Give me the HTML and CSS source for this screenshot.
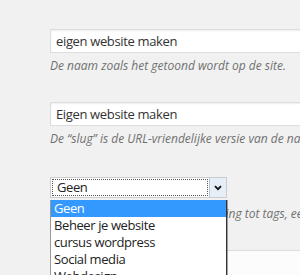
FILE: index.html
```html
<!DOCTYPE html>
<html lang="nl">
<head>
  <meta charset="UTF-8" />
  <meta name="viewport" content="width=device-width, initial-scale=1" />
  <title>Categorie bewerken</title>
  <link rel="stylesheet" href="styles.css">
</head>
<body>
  <div class="form-wrap">
    <div class="form-field field-name">
      <input class="text-input" type="text" value="eigen website maken" />
      <p class="description">De naam zoals het getoond wordt op de site.</p>
    </div>

    <div class="form-field field-slug">
      <input class="text-input" type="text" value="Eigen website maken" />
      <p class="description">De &ldquo;slug&rdquo; is de URL-vriendelijke versie van de naam.</p>
    </div>

    <div class="form-field field-parent">
      <div class="select-wrap">
        <div class="select-box">
          <span class="select-value">Geen</span>
          <span class="select-btn">
            <svg width="8" height="6" viewBox="0 0 8 6"><path d="M1 1.2 L4 4.2 L7 1.2" fill="none" stroke="#111" stroke-width="1.8"/></svg>
          </span>
        </div>
        <ul class="select-list">
          <li class="selected">Geen</li>
          <li>Beheer je website</li>
          <li>cursus wordpress</li>
          <li>Social media</li>
          <li>Webdesign</li>
        </ul>
      </div>
      <p class="description">Categorieën hebben, in tegenstelling tot tags, een hiërarchie.</p>
    </div>

    <div class="form-field field-desc">
      <textarea class="text-area" rows="5"></textarea>
    </div>
  </div>
</body>
</html>
```

FILE: styles.css
```css
* {
  box-sizing: border-box;
  margin: 0; padding: 0;
}
html, body {
  height: 100%;
  background-color: #f1f1f1;
  color: #333;
  font-family: "Open Sans", "Liberation Sans", sans-serif;
  overflow: hidden;
}
.form-wrap {
  padding: 29px 0 0 50px;
}
.form-field {
  width: 420px;
}
.field-slug {
  margin-top: 27px;
}
.field-parent {
  margin-top: 29px;
}
.field-desc {
  margin-top: 27px;
}
.text-input {
  display: block;
  width: 100%;
  height: 24px;
  padding: 0 5px;
  border: 1px solid #ddd;
  box-shadow: inset 0 1px 2px rgba(0,0,0,0.07);
  background: #fff;
  color: #333;
  font-family: "Open Sans", "Liberation Sans", sans-serif;
  font-size: 13px;
  letter-spacing: -0.35px;
  outline: none;
}
.description {
  margin-top: 4px;
  line-height: 18px;
  font-size: 12px;
  font-style: italic;
  color: #707070;
  white-space: nowrap;
}
.field-parent .description {
  margin-top: 7px;
}

/* select + open dropdown */
.select-wrap {
  position: relative;
  width: 177px;
}
.select-box {
  display: flex;
  height: 21px;
  border: 1px solid #ccc;
  background: #fff;
}
.select-value {
  flex: 1;
  margin: 1px;
  padding-left: 4px;
  border: 1px dotted #555;
  font-size: 13px;
  letter-spacing: -0.4px;
  line-height: 15px;
  color: #222;
}
.select-btn {
  width: 17px;
  display: flex;
  align-items: center;
  justify-content: center;
  background: #e6eef8;
  border-left: 1px solid #b8c8dc;
}
.select-list {
  position: absolute;
  top: 23px;
  left: 0;
  width: 177px;
  height: 90px;
  list-style: none;
  background: #fff;
  border-left: 1px solid #9a9a9a;
  border-right: 1px solid #333;
  box-shadow: 1px 0 0 rgba(0,0,0,0.35);
  z-index: 10;
  overflow: hidden;
}
.select-list li {
  height: 17px;
  line-height: 17px;
  padding-left: 3px;
  font-size: 13px;
  letter-spacing: -0.4px;
  color: #222;
  white-space: nowrap;
}
.select-list li.selected {
  background: #3399ff;
  color: #fff;
}

.text-area {
  display: block;
  width: 100%;
  height: 80px;
  border: 1px solid #ddd;
  background: #fcfcfc;
  resize: none;
}
```
